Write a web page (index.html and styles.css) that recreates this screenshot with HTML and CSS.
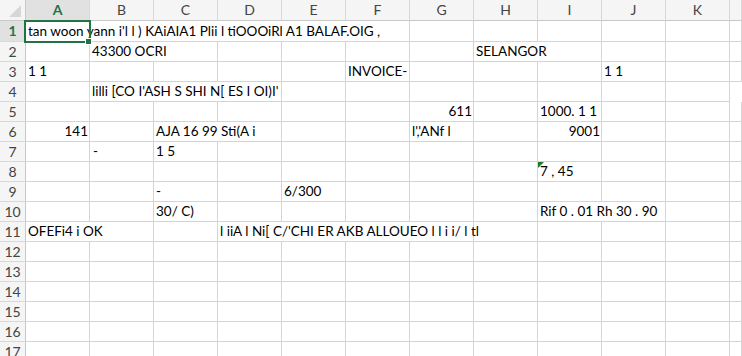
FILE: index.html
```html
<!DOCTYPE html>
<html>
<head>
  <title>Sheet1</title>
  <link rel="stylesheet" href="styles.css">
</head>
<body>
  <div class="sheet">
    <div class="row head">
      <div class="corner">
        <svg width="14" height="14" viewBox="0 0 14 14"><polygon points="13,1 13,13 1,13" fill="#d6d6d6"/></svg>
      </div>
      <div class="ch sel">A</div>
      <div class="ch">B</div>
      <div class="ch">C</div>
      <div class="ch">D</div>
      <div class="ch">E</div>
      <div class="ch">F</div>
      <div class="ch">G</div>
      <div class="ch">H</div>
      <div class="ch">I</div>
      <div class="ch">J</div>
      <div class="ch">K</div>
      <div class="ch"></div>
    </div>

    <div class="row first">
      <div class="rh sel">1</div>
      <div class="c s6 active">tan woon yann i'l l ) KAiAIA1 Plii l tiOOOiRl A1 BALAF.OIG ,<span class="outline"></span><span class="handle"></span></div>
      <div class="c"></div>
      <div class="c"></div>
      <div class="c"></div>
      <div class="c"></div>
      <div class="c"></div>
      <div class="c"></div>
    </div>

    <div class="row">
      <div class="rh">2</div>
      <div class="c"></div>
      <div class="c s2">43300 OCRI</div>
      <div class="c"></div>
      <div class="c"></div>
      <div class="c"></div>
      <div class="c"></div>
      <div class="c s2">SELANGOR</div>
      <div class="c"></div>
      <div class="c"></div>
      <div class="c"></div>
    </div>

    <div class="row">
      <div class="rh">3</div>
      <div class="c">1 1</div>
      <div class="c"></div>
      <div class="c"></div>
      <div class="c"></div>
      <div class="c"></div>
      <div class="c">INVOICE-</div>
      <div class="c"></div>
      <div class="c"></div>
      <div class="c"></div>
      <div class="c">1 1</div>
      <div class="c"></div>
      <div class="c"></div>
    </div>

    <div class="row">
      <div class="rh">4</div>
      <div class="c"></div>
      <div class="c s3">lilli [CO I'ASH S SHI N[ ES I OI)I'</div>
      <div class="c"></div>
      <div class="c"></div>
      <div class="c"></div>
      <div class="c"></div>
      <div class="c"></div>
      <div class="c"></div>
      <div class="c"></div>
    </div>

    <div class="row">
      <div class="rh">5</div>
      <div class="c"></div>
      <div class="c"></div>
      <div class="c"></div>
      <div class="c"></div>
      <div class="c"></div>
      <div class="c"></div>
      <div class="c num">611</div>
      <div class="c"></div>
      <div class="c">1000. 1 1</div>
      <div class="c"></div>
      <div class="c"></div>
      <div class="c"></div>
    </div>

    <div class="row">
      <div class="rh">6</div>
      <div class="c num">141</div>
      <div class="c"></div>
      <div class="c s2">AJA 16 99 Sti(A i</div>
      <div class="c"></div>
      <div class="c"></div>
      <div class="c">l','ANf l</div>
      <div class="c"></div>
      <div class="c num">9001</div>
      <div class="c"></div>
      <div class="c"></div>
      <div class="c"></div>
    </div>

    <div class="row">
      <div class="rh">7</div>
      <div class="c"></div>
      <div class="c dash">-</div>
      <div class="c">1 5</div>
      <div class="c"></div>
      <div class="c"></div>
      <div class="c"></div>
      <div class="c"></div>
      <div class="c"></div>
      <div class="c"></div>
      <div class="c"></div>
      <div class="c"></div>
      <div class="c"></div>
    </div>

    <div class="row">
      <div class="rh">8</div>
      <div class="c"></div>
      <div class="c"></div>
      <div class="c"></div>
      <div class="c"></div>
      <div class="c"></div>
      <div class="c"></div>
      <div class="c"></div>
      <div class="c"></div>
      <div class="c flag">7 , 45</div>
      <div class="c"></div>
      <div class="c"></div>
      <div class="c"></div>
    </div>

    <div class="row">
      <div class="rh">9</div>
      <div class="c"></div>
      <div class="c"></div>
      <div class="c">-</div>
      <div class="c"></div>
      <div class="c">6/300</div>
      <div class="c"></div>
      <div class="c"></div>
      <div class="c"></div>
      <div class="c"></div>
      <div class="c"></div>
      <div class="c"></div>
      <div class="c"></div>
    </div>

    <div class="row">
      <div class="rh">10</div>
      <div class="c"></div>
      <div class="c"></div>
      <div class="c">30/ C)</div>
      <div class="c"></div>
      <div class="c"></div>
      <div class="c"></div>
      <div class="c"></div>
      <div class="c"></div>
      <div class="c s2">Rif 0 . 01 Rh 30 . 90</div>
      <div class="c"></div>
      <div class="c"></div>
    </div>

    <div class="row">
      <div class="rh">11</div>
      <div class="c s2">OFEFi4 i OK</div>
      <div class="c"></div>
      <div class="c s4 spill">l iiA l Ni[ C/'CHI ER AKB ALLOUEO l l i i/ l tl</div>
      <div class="c"></div>
      <div class="c"></div>
      <div class="c"></div>
      <div class="c"></div>
      <div class="c"></div>
    </div>

    <div class="row"><div class="rh">12</div><div class="c"></div><div class="c"></div><div class="c"></div><div class="c"></div><div class="c"></div><div class="c"></div><div class="c"></div><div class="c"></div><div class="c"></div><div class="c"></div><div class="c"></div><div class="c"></div></div>
    <div class="row"><div class="rh">13</div><div class="c"></div><div class="c"></div><div class="c"></div><div class="c"></div><div class="c"></div><div class="c"></div><div class="c"></div><div class="c"></div><div class="c"></div><div class="c"></div><div class="c"></div><div class="c"></div></div>
    <div class="row"><div class="rh">14</div><div class="c"></div><div class="c"></div><div class="c"></div><div class="c"></div><div class="c"></div><div class="c"></div><div class="c"></div><div class="c"></div><div class="c"></div><div class="c"></div><div class="c"></div><div class="c"></div></div>
    <div class="row"><div class="rh">15</div><div class="c"></div><div class="c"></div><div class="c"></div><div class="c"></div><div class="c"></div><div class="c"></div><div class="c"></div><div class="c"></div><div class="c"></div><div class="c"></div><div class="c"></div><div class="c"></div></div>
    <div class="row"><div class="rh">16</div><div class="c"></div><div class="c"></div><div class="c"></div><div class="c"></div><div class="c"></div><div class="c"></div><div class="c"></div><div class="c"></div><div class="c"></div><div class="c"></div><div class="c"></div><div class="c"></div></div>
    <div class="row"><div class="rh">17</div><div class="c"></div><div class="c"></div><div class="c"></div><div class="c"></div><div class="c"></div><div class="c"></div><div class="c"></div><div class="c"></div><div class="c"></div><div class="c"></div><div class="c"></div><div class="c"></div></div>
  </div>
</body>
</html>
```

FILE: styles.css
```css
body {
  margin: 0;
  background-color: white;
  font-family: Lato, "Liberation Sans", sans-serif;
  font-size: 13.5px;
  color: #000;
  overflow: hidden;
}
.sheet {
  width: 742px;
  height: 356px;
  overflow: hidden;
}
.row {
  display: grid;
  grid-template-columns: 26px repeat(11, 64px) 1fr;
  height: 20px;
}
.row.head,
.row.first {
  height: 21px;
}
.corner,
.ch,
.rh,
.c {
  box-sizing: border-box;
  white-space: nowrap;
  overflow: hidden;
}
.corner {
  background-color: #f5f5f5;
  border-right: 1px solid #c8c8c8;
  border-bottom: 1px solid #c8c8c8;
  display: flex;
  align-items: flex-end;
  justify-content: flex-end;
  padding: 0 3px 2px 0;
}
.corner svg {
  display: block;
}
.ch {
  background-color: #f5f5f5;
  border-right: 1px solid #d8d8d8;
  border-bottom: 1px solid #c8c8c8;
  text-align: center;
  line-height: 20px;
  font-size: 14px;
  color: #444;
}
.rh {
  background-color: #f5f5f5;
  border-right: 1px solid #c8c8c8;
  border-bottom: 1px solid #d8d8d8;
  text-align: center;
  line-height: 19px;
  font-size: 14px;
  color: #444;
}
.ch.sel,
.rh.sel {
  background-color: #e1e1e1;
  color: #217346;
  font-weight: bold;
}
.first .rh {
  line-height: 20px;
}
.c {
  border-right: 1px solid #d4d4d4;
  border-bottom: 1px solid #d4d4d4;
  line-height: 19px;
  padding: 0 2px 0 2px;
}
.first .c {
  line-height: 20px;
}
.s2 { grid-column: span 2; }
.s3 { grid-column: span 3; }
.s4 { grid-column: span 4; }
.s6 { grid-column: span 6; }
.spill {
  overflow: visible;
}
.num {
  text-align: right;
  padding-right: 1px;
}
.dash {
  padding-left: 3px;
}
.active {
  position: relative;
  overflow: visible;
}
.outline {
  position: absolute;
  left: -2px;
  top: -1px;
  width: 67px;
  height: 23px;
  box-sizing: border-box;
  border: 2px solid #217346;
  z-index: 2;
}
.handle {
  position: absolute;
  left: 59px;
  top: 17px;
  width: 7px;
  height: 7px;
  box-sizing: border-box;
  background-color: #217346;
  border: 1px solid white;
  z-index: 3;
}
.flag {
  position: relative;
}
.flag::before {
  content: "";
  position: absolute;
  left: 0;
  top: 0;
  border-top: 6px solid #1e7b34;
  border-right: 6px solid transparent;
}
```
